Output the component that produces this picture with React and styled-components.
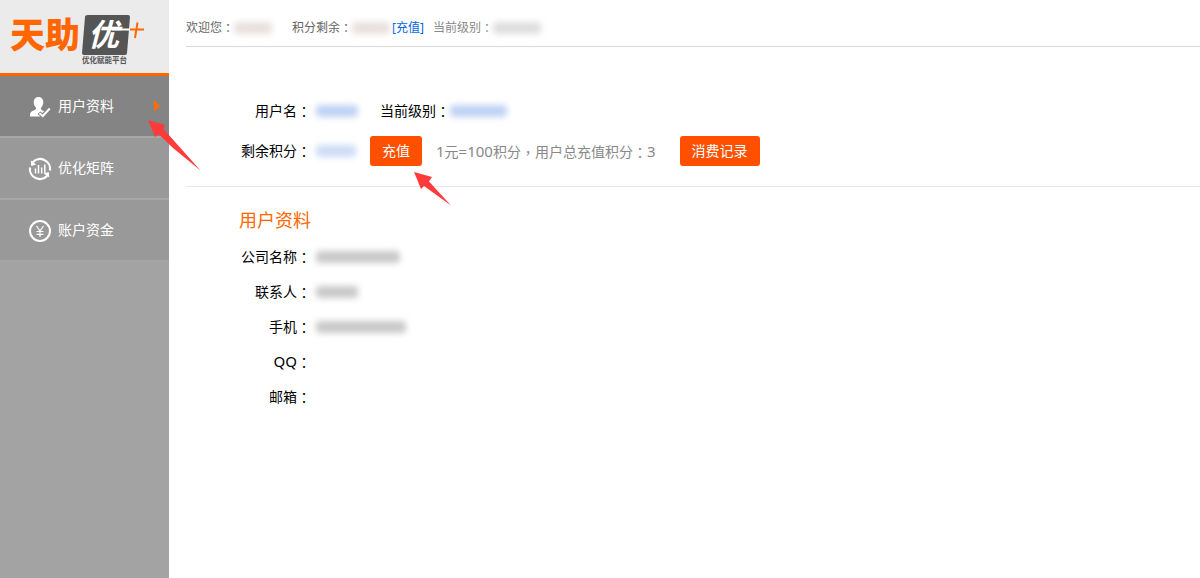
import React from 'react'
import styled, { createGlobalStyle } from 'styled-components'

const GlobalStyle = createGlobalStyle`
  * {
    box-sizing: border-box;
  }

  body {
    margin: 0;
    background: #fff;
    color: #000;
    font-family: "Noto Sans", "Noto Sans CJK SC", sans-serif;
    font-size: 14px;
  }
`;

const Page = styled.div`
  display: flex;
  min-height: 100vh;
`;

const Sidebar = styled.aside`
  position: relative;
  flex: 0 0 169px;
  background: #a3a3a3;
`;

const LogoLink = styled.a`
  display: block;
  height: 76px;
  background: #ebebeb;
  border-bottom: 3px solid #ff6600;

  svg {
    display: block;
  }
`;

const NavLink = styled.a`
  display: flex;
  align-items: center;
  gap: 6px;
  height: 62px;
  padding: 0 9px 0 28px;
  border-bottom: 2px solid #a6a6a6;
  background: ${({ $active }) => ($active ? '#848484' : '#999')};
  color: #fff;
  line-height: 20px;
  text-decoration: none;

  svg {
    margin-top: 2px;
  }
`;

const Caret = styled.span`
  margin-left: auto;
  border: solid transparent;
  border-width: 6px 0 6px 6px;
  border-left-color: #ff6c00;
`;

const Main = styled.main`
  flex: 1;
  min-width: 0;
  padding-left: 17px;
`;

const TopBar = styled.header`
  display: flex;
  align-items: center;
  height: 47px;
  padding-top: 10px;
  border-bottom: 1px solid #d9d9d9;
  color: #666;
  font-size: 12px;
  line-height: 20px;
`;

const TopItem = styled.div`
  display: flex;
  align-items: center;
  margin-right: ${({ $gap }) => $gap || 0}px;
  color: ${({ $muted }) => ($muted ? '#888' : 'inherit')};
`;

const TopLink = styled.a`
  margin: 0 9px 0 2px;
  color: #0066dd;
  text-decoration: none;
`;

const Punct = styled.span`
  font-family: "Noto Sans CJK TC", sans-serif;
  line-height: 16px;
  vertical-align: -1px;
`;

const Latin = styled.span`
  font-size: 15px;
`;

const Mask = styled.span`
  display: inline-block;
  width: ${({ $width }) => $width}px;
  height: 12px;
  border-radius: 4px;
  background: ${({ $color }) => $color};
  filter: blur(3px);
`;

const Account = styled.section`
  padding: 44px 0 15px 52px;
  border-bottom: 1px solid #e8e8e8;
`;

const Profile = styled.section`
  padding: 18px 0 0 52px;
`;

const Title = styled.h2`
  margin: 0 0 4px 1px;
  color: #ff6600;
  font-size: 18px;
  font-weight: 400;
  line-height: 30px;
`;

const Row = styled.div`
  display: flex;
  align-items: center;
  height: ${({ $tall }) => ($tall ? 40 : 35)}px;
  line-height: 20px;
`;

const Label = styled.span`
  width: 73px;
  margin-right: 5px;
  text-align: right;
  white-space: nowrap;
`;

const InlineLabel = styled.span`
  margin-left: 22px;
`;

const Hint = styled.span`
  margin: 0 24px 0 14px;
  color: #888;
`;

const Button = styled.button`
  height: 30px;
  margin-left: ${({ $gap }) => $gap || 0}px;
  padding: 0 12px;
  border: none;
  border-radius: 3px;
  background: #ff5000;
  color: #fff;
  font-family: inherit;
  font-size: 14px;
  line-height: 20px;
  cursor: pointer;
`;

const Pointer = styled.svg`
  position: absolute;
  z-index: 2;
  left: ${({ $left }) => $left}px;
  top: ${({ $top }) => $top}px;
  pointer-events: none;
`;

const ButtonWrap = styled.span`
  position: relative;
  display: inline-flex;
`;

const Logo = () => (
  <svg width="169" height="73" viewBox="0 0 169 73">
    <text x="10" y="48" fill="#ff6600" fontFamily="Noto Sans CJK SC" fontSize="35" fontWeight="900">天助</text>
    <path d="M88 15h40q2 0 2 2l-3 36q0 2-2 2H84q-2 0-2-2l3-36q0-2 3-2z" fill="#555" />
    <text x="88" y="46" fill="#fff" fontFamily="Noto Sans CJK SC" fontSize="31" fontWeight="700" fontStyle="italic">优</text>
    <path d="M130 29.500h14M137.500 22.500l-2.500 15.500" fill="none" stroke="#ff6600" strokeWidth="2" />
    <path d="M112 29.500h18" stroke="#fff" strokeWidth="2" />
    <text x="82" y="63" fill="#555" fontFamily="Noto Sans CJK SC" fontSize="7.500" fontWeight="700">优化赋能平台</text>
  </svg>
)

const UserIcon = () => (
  <svg width="24" height="24" viewBox="0 0 24 24">
    <path d="M10.500 2c3 0 4.800 2 4.800 5 0 2.500-.9 4.400-2.300 5.700-.4 1.300.1 2 1.600 2.700l1.600.8-1.900 1.800-1.800-1.600-3 2.600 2.800 2.500H2c0-4 .7-4.800 3.500-6 2-.8 3-1.500 2.500-3C6.500 11.500 5.700 9.500 5.700 7c0-3 1.800-5 4.800-5z" fill="#fff" />
    <path d="M11.500 18.200l3.300 2.800 7-7.500" fill="none" stroke="#fff" strokeWidth="2" />
  </svg>
)

const MatrixIcon = () => (
  <svg width="24" height="24" viewBox="0 0 24 24" fill="none" stroke="#fff" strokeWidth="2.200">
    <path d="M4.500 5.500A10 10 0 0 1 22 13.500M19.500 18.500A10 10 0 0 1 2 10.500" />
    <path d="M2.800 3.500l.4 5.500 5-1.500zM21.200 20.500l-.4-5.500-5 1.500z" fill="#fff" stroke="none" />
    <path d="M7.500 16.500v-5M10.500 16.500V8M13.700 16.500v-6M16.800 16.500V7.500" strokeWidth="1.500" />
  </svg>
)

const FundIcon = () => (
  <svg width="24" height="24" viewBox="0 0 24 24" fill="none" stroke="#fff">
    <circle cx="12" cy="12" r="10" strokeWidth="2" />
    <path d="M8.500 7l3.500 5 3.500-5M12 12v6M8.500 12.500h7M8.500 15.300h7" strokeWidth="1.200" />
  </svg>
)

const menu = [
  { name: '用户资料', icon: <UserIcon />, active: true },
  { name: '优化矩阵', icon: <MatrixIcon /> },
  { name: '账户资金', icon: <FundIcon /> },
]

const profile = [
  { label: '公司名称', width: 84 },
  { label: '联系人', width: 42 },
  { label: '手机', width: 90 },
  { label: <Latin>QQ</Latin> },
  { label: '邮箱' },
]

const App = () => {
  return (
    <>
      <GlobalStyle />
      <Page>
        <Sidebar>
          <LogoLink href="#"><Logo /></LogoLink>
          <nav>
            {menu.map((item) => (
              <NavLink href="#" key={item.name} $active={item.active}>
                {item.icon}
                {item.name}
                {item.active && <Caret />}
              </NavLink>
            ))}
          </nav>
          <Pointer $left={148} $top={120} width="53" height="51" viewBox="0 0 53 51">
            <path d="M0 0l17 5-1.500 4L52.500 50.500 25 28 11 14.500 7 17z" fill="#ff3b3b" />
          </Pointer>
        </Sidebar>
        <Main>
          <TopBar>
            <TopItem $gap={20}>欢迎您<Punct>：</Punct><Mask $width={38} $color="#e8e0dc" /></TopItem>
            <TopItem>积分剩余<Punct>：</Punct><Mask $width={38} $color="#e8e0dc" /></TopItem>
            <TopLink href="#">[充值]</TopLink>
            <TopItem $muted>当前级别<Punct>：</Punct><Mask $width={48} $color="#dedede" /></TopItem>
          </TopBar>
          <Account>
            <Row $tall>
              <Label>用户名<Punct>：</Punct></Label>
              <Mask $width={42} $color="#bfd2f5" />
              <InlineLabel>当前级别<Punct>：</Punct></InlineLabel>
              <Mask $width={57} $color="#bfd2f5" />
            </Row>
            <Row $tall>
              <Label>剩余积分<Punct>：</Punct></Label>
              <Mask $width={40} $color="#cddcf6" />
              <ButtonWrap>
                <Button type="button" $gap={14}>充值</Button>
                <Pointer $left={58} $top={36} width="38" height="34" viewBox="0 0 38 34">
                  <path d="M0 0l18 5-3 4.500L37 33.500 10 14l-3 3z" fill="#ff3b3b" />
                </Pointer>
              </ButtonWrap>
              <Hint>
                <Latin>1</Latin>元<Latin>=100</Latin>积分<Punct>，</Punct>用户总充值积分<Punct>：</Punct><Latin>3</Latin>
              </Hint>
              <Button type="button">消费记录</Button>
            </Row>
          </Account>
          <Profile>
            <Title>用户资料</Title>
            {profile.map((item, i) => (
              <Row key={i}>
                <Label>{item.label}<Punct>：</Punct></Label>
                {item.width && <Mask $width={item.width} $color="#c8c8c8" />}
              </Row>
            ))}
          </Profile>
        </Main>
      </Page>
    </>
  )
}

export default App
